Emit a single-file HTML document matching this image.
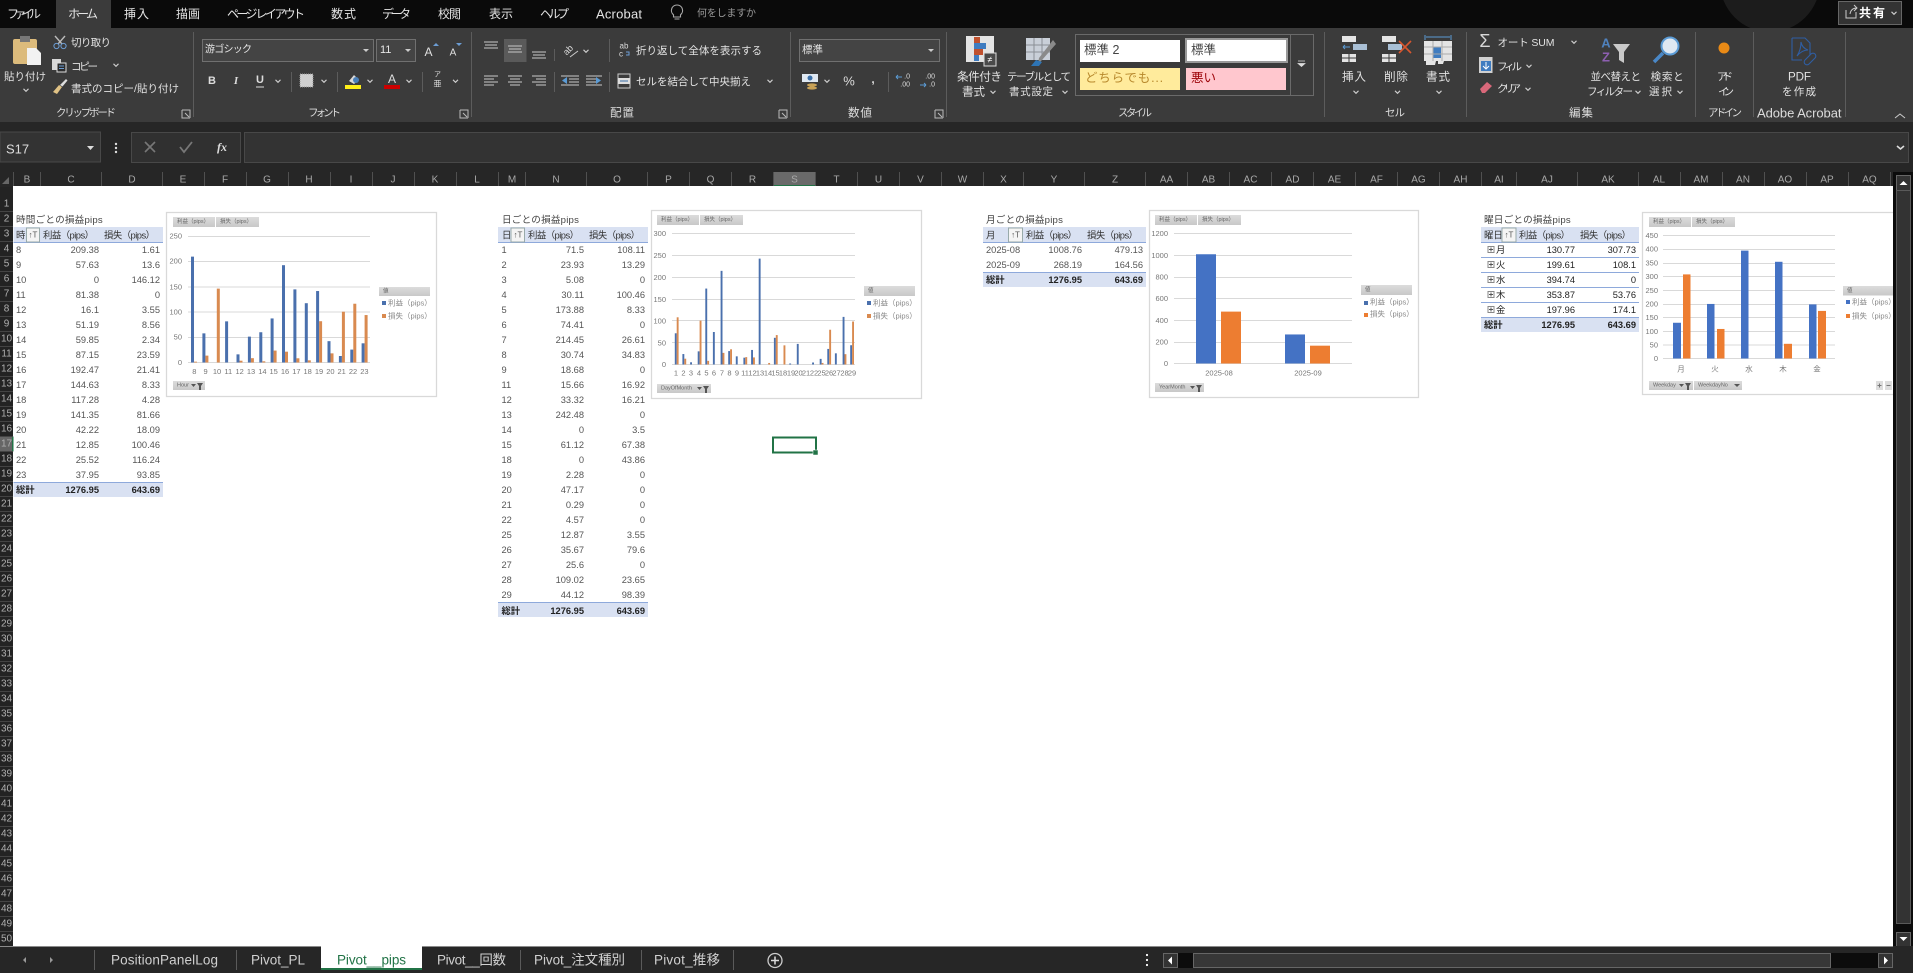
<!DOCTYPE html>
<html lang="ja"><head><meta charset="utf-8"><title>Excel</title>
<style>
html,body{margin:0;padding:0;background:#262626;width:1913px;height:973px;overflow:hidden}
svg{display:block;position:absolute;left:0;top:0;font-family:"Liberation Sans","Noto Sans CJK JP",sans-serif;filter:blur(.3px)}
text{dominant-baseline:central;white-space:pre}
.tab{font-size:12px;fill:#e4e4e4}
.r{font-size:10.5px;fill:#e2e2e2}
.r2{font-size:11.6px;fill:#e2e2e2}
.gl{font-size:10.5px;fill:#dcdcdc}
.gl2{font-size:11.6px;fill:#dcdcdc}
.m{text-anchor:middle}
.e{text-anchor:end}
.ch{font-size:10px;fill:#a8a8a8;text-anchor:middle}
.rh{font-size:10px;fill:#b0b0b0;text-anchor:middle}
.d{font-size:9.3px;fill:#555}
.b{font-size:9.3px;fill:#222;font-weight:bold}
.h{font-size:9.4px;fill:#333}
.ti{font-size:9.6px;fill:#444;letter-spacing:.2px}
.d text,text.d,.b text,text.b,text.h{transform:translateY(1px)}
text.ti{transform:translateY(1.5px)}
.ax{font-size:7.5px;fill:#777}
.fb{font-size:5.5px;fill:#666}
.lg{font-size:7.5px;fill:#888}
.tb{font-size:13.5px;fill:#d0d0d0}
.cv{fill:none;stroke:#d0d0d0;stroke-width:1.1}
.g{stroke:#d9d9d9;stroke-width:1}
.i{stroke:#c8c8c8;stroke-width:1;fill:none}
</style></head><body>
<svg width="1913" height="973" viewBox="0 0 1913 973" xmlns="http://www.w3.org/2000/svg">
<defs><path id="c" class="cv" d="M-2.5 -1.2L0 1.3L2.5 -1.2"/><path id="la" fill="none" stroke="#bbb" stroke-width="1" d="M0 0H8V8M0 0V8H8M3 3L7 7"/><linearGradient id="gb" x1="0" x2="0" y1="0" y2="1"><stop offset="0" stop-color="#dcdcdc"/><stop offset="1" stop-color="#c8c8c8"/></linearGradient></defs>

<!-- title bar -->
<rect width="1913" height="28" fill="#0a0a0a"/>
<circle cx="1770" cy="-18" r="50" fill="#1c1c1c"/><circle cx="1680" cy="-30" r="30" fill="#161616"/>
<rect x="56" width="55" height="28" fill="#3b3b3b"/>
<g class="tab">
<text x="7" y="14" textLength="34">ファイル</text><text x="68" y="14" textLength="30">ホーム</text><text x="124" y="14" textLength="25">挿入</text><text x="176" y="14" textLength="24">描画</text><text x="227" y="14" textLength="78">ページ レイアウト</text><text x="331" y="14" textLength="25">数式</text><text x="382" y="14" textLength="29">データ</text><text x="438" y="14" textLength="23">校閲</text><text x="489" y="14" textLength="24">表示</text><text x="540" y="14" textLength="29">ヘルプ</text><text x="596" y="14" font-size="13" textLength="46">Acrobat</text>
</g>
<path d="M677 5a5.5 5.5 0 0 0-3.5 9.8V17h7v-2.2A5.5 5.5 0 0 0 677 5zM674.5 19h5" fill="none" stroke="#aaa" stroke-width="1.1"/>
<text x="697" y="14" font-size="10" fill="#9a9a9a" textLength="59">何をしますか</text>
<rect x="1838.5" y="1.5" width="63" height="23" fill="#333" stroke="#666"/>
<path d="M1846 10v8h10v-6M1850 14q1-6 7-6M1854 5l3 3-3 3" fill="none" stroke="#ccc"/>
<text x="1859" y="13" font-size="12" font-weight="bold" fill="#fff" textLength="26">共有</text>
<use href="#c" x="1894" y="13"/>

<!-- ribbon -->
<rect y="28" width="1913" height="94" fill="#3b3b3b"/>
<rect y="122" width="1913" height="65" fill="#262626"/>
<path d="M193.5 32V117M471.5 32V117M790.5 32V117M946.5 32V117M1324.5 32V117M1466.5 32V117M1695.5 32V117M1753.5 32V117M1845.5 32V117" stroke="#5c5c5c"/>
<!-- clipboard -->
<rect x="13" y="39" width="24" height="25" rx="2" fill="#dcbb7c"/><rect x="20" y="36" width="10" height="6" fill="#777"/><path d="M27 48h9l5 5v12H27z" fill="#f2f2f2"/>
<text class="r" x="4" y="77" textLength="42">貼り付け</text><use href="#c" x="26" y="90"/>
<path d="M55 36l7 8M65 36l-7 8" stroke="#bbb" stroke-width="1.4"/><circle cx="56.5" cy="46" r="2.6" fill="none" stroke="#6c9dd4"/><circle cx="63.5" cy="46" r="2.6" fill="none" stroke="#6c9dd4"/>
<text class="r" x="71" y="43" textLength="40">切り取り</text>
<rect x="52" y="59" width="9" height="11" fill="#d8d8d8"/><rect x="57" y="63" width="9" height="9" fill="#2d2d2d" stroke="#ddd"/><path d="M59 66h5M59 68.5h5" stroke="#6c9dd4"/>
<text class="r" x="71" y="67" textLength="27">コピー</text><use href="#c" x="116" y="65"/>
<path d="M53 92l6-7 3 2-5 7z" fill="#e0c285"/><path d="M60 85l6-6 1.5 1.5-5 6z" fill="#ddd"/>
<text class="r" x="71" y="89" textLength="108">書式のコピー/貼り付け</text>
<text class="gl" x="56" y="113" textLength="60">クリップボード</text><use href="#la" x="182" y="110"/>
<!-- font -->
<rect x="202.5" y="39.5" width="171" height="22" fill="#444" stroke="#707070"/>
<text x="205" y="50" font-size="10" fill="#e6e6e6" textLength="47">游ゴシック</text><path d="M363 49h6l-3 3z" fill="#ccc"/>
<rect x="376.5" y="39.5" width="39" height="22" fill="#444" stroke="#707070"/>
<text x="380" y="50" font-size="11" fill="#e6e6e6">11</text><path d="M405 49h6l-3 3z" fill="#ccc"/>
<text x="428.5" y="52" font-size="12" fill="#e0e0e0" class="m">A</text><path d="M433 46l3-3 3 3z" fill="#6c9dd4"/>
<text x="453" y="53" font-size="10" fill="#e0e0e0" class="m">A</text><path d="M456 43h6l-3 3z" fill="#6c9dd4"/>
<text x="212" y="81" font-size="11" font-weight="bold" fill="#ddd" class="m">B</text>
<text x="236" y="81" font-size="11" font-style="italic" font-weight="bold" font-family="Liberation Serif" fill="#ddd" class="m">I</text>
<text x="260" y="80" font-size="11" font-weight="bold" fill="#ddd" class="m">U</text><path d="M256 87h8" stroke="#ddd"/><use href="#c" x="278" y="81"/>
<path d="M291.5 72V92M337.5 72V92M422.5 72V92" stroke="#5c5c5c"/>
<rect x="300" y="74" width="13" height="13" fill="#cfcfcf" stroke="#999" stroke-dasharray="1 1"/><use href="#c" x="324" y="81"/>
<path d="M349 81l5-6 5 5-5 4z" fill="#d8d8d8"/><circle cx="356" cy="80" r="3" fill="#4a7fb8"/><rect x="345" y="85" width="16" height="4" fill="#ffef19"/><use href="#c" x="370" y="81"/>
<text x="392" y="79" font-size="12" fill="#ddd" class="m">A</text><rect x="384" y="85" width="16" height="4" fill="#c00"/><use href="#c" x="409" y="81"/>
<text x="437.5" y="75" font-size="7" fill="#ddd" class="m">ア</text><text x="437.5" y="84" font-size="8" fill="#ddd" class="m">亜</text><use href="#c" x="455.5" y="81"/>
<text class="gl" x="308" y="113" textLength="33">フォント</text><use href="#la" x="460" y="110"/>
<!-- alignment -->
<rect x="504" y="39" width="22.5" height="23" fill="#5a5a5a"/>
<path class="i" d="M484 42h14M485 45h12M484 48h14M508 46h14M509 49h12M508 52h14M532 52h14M533 55h12M532 58h14M484 76h14M484 79h10M484 82h14M484 85h10M508 76h14M510 79h10M508 82h14M510 85h10M532 76h14M536 79h10M532 82h14M536 85h10"/>
<path d="M554.5 49V61M554.5 72V92M609.5 39V62M609.5 72V92" stroke="#5c5c5c"/>
<text x="568" y="50" font-size="9" fill="#ddd" class="m" transform="rotate(-45 568 50)">ab</text><path d="M570 57l8-6" stroke="#ccc"/><use href="#c" x="586" y="51"/>
<path d="M561 76h18M569 79h10M569 82h10M561 85h18" stroke="#c8c8c8"/><path d="M567 77v7l-5-3.5z" fill="#5b9bd5"/>
<path d="M586 76h16M586 79h10M586 82h10M586 85h16" stroke="#c8c8c8"/><path d="M596 77v7l5-3.5z" fill="#5b9bd5"/>
<text x="624" y="46" font-size="8" fill="#ddd" class="m">ab</text><text x="621" y="54" font-size="8" fill="#ddd" class="m">c</text><path d="M626 52h3v3h-3" stroke="#6c9dd4" fill="none"/>
<text class="r" x="636" y="51" textLength="126">折り返して全体を表示する</text>
<rect x="618" y="74" width="12" height="14" fill="none" stroke="#ccc"/><rect x="618" y="78" width="12" height="6" fill="#ddd"/><path d="M620 81h8" stroke="#3a6fa8"/>
<text class="r" x="636" y="82" textLength="115">セルを結合して中央揃え</text><use href="#c" x="770" y="81"/>
<text class="gl2" x="610" y="113" textLength="24">配置</text><use href="#la" x="779" y="110"/>
<!-- number -->
<rect x="799.5" y="39.5" width="140" height="22" fill="#444" stroke="#707070"/>
<text x="802" y="50" font-size="10.5" fill="#e6e6e6">標準</text><path d="M928 49h6l-3 3z" fill="#ccc"/>
<rect x="802" y="74" width="16" height="8" fill="#dfe8f2"/><circle cx="810" cy="78" r="2.5" fill="#3a6fa8"/><ellipse cx="812" cy="85" rx="5" ry="1.6" fill="#c9a257"/><ellipse cx="812" cy="88" rx="5" ry="1.6" fill="#c9a257"/>
<use href="#c" x="827" y="81"/><text x="849" y="81" font-size="13" fill="#ddd" class="m">%</text><text x="873" y="79" font-size="12" font-weight="bold" fill="#ddd" class="m">,</text>
<path d="M888.5 72V92" stroke="#5c5c5c"/>
<text x="910" y="77" font-size="7" fill="#ddd" class="e">.0</text><text x="910" y="85" font-size="7" fill="#ddd" class="e">.00</text><path d="M896 77h6M896 77l2-2M896 77l2 2" stroke="#5b9bd5"/>
<text x="935" y="77" font-size="7" fill="#ddd" class="e">.00</text><text x="935" y="85" font-size="7" fill="#ddd" class="e">.0</text><path d="M920 85h6M926 85l-2-2M926 85l-2 2" stroke="#5b9bd5"/>
<text class="gl2" x="848" y="113" textLength="24">数値</text><use href="#la" x="935" y="110"/>
<!-- conditional / table -->
<rect x="966" y="36" width="28" height="26" fill="#e4e4e4"/><rect x="974" y="37" width="6" height="6" fill="#c0512e"/><rect x="974" y="43" width="12" height="6" fill="#3f7cc0"/><rect x="974" y="49" width="9" height="6" fill="#c0512e"/><rect x="974" y="55" width="5" height="6" fill="#3f7cc0"/><rect x="984" y="53" width="12" height="13" fill="#4a4a4a" stroke="#ddd"/><text x="990" y="59.5" font-size="9" fill="#fff" class="m">≠</text>
<text class="r2" x="957" y="77" textLength="45">条件付き</text><text class="r2" x="962" y="92" textLength="23">書式</text><use href="#c" x="993" y="92"/>
<rect x="1026" y="38" width="24" height="22" fill="#c9cfd8"/><path d="M1026 45h24M1026 52h24M1034 38v22M1042 38v22" stroke="#8a8f96"/><path d="M1056 44l-14 16-4 4 1-6 14-18z" fill="#8a8a8a"/><path d="M1036 60l6 2-3 4h-8z" fill="#2e75b6"/>
<text class="r" x="1007" y="77" textLength="64">テーブルとして</text><text class="r" x="1009" y="92" textLength="44">書式設定</text><use href="#c" x="1065" y="92"/>
<!-- styles -->
<rect x="1075.5" y="34.5" width="238" height="61" fill="none" stroke="#6a6a6a"/><path d="M1290.5 34V96" stroke="#6a6a6a"/>
<rect x="1080" y="40" width="100" height="22" fill="#fff"/><text x="1084" y="50" font-size="12.5" fill="#444">標準 2</text>
<rect x="1186" y="39" width="101" height="23" fill="#fff" stroke="#999" stroke-width="2"/><text x="1191" y="50" font-size="12.5" fill="#444">標準</text>
<rect x="1080" y="68" width="100" height="22" fill="#ffeb9c"/><text x="1085" y="78" font-size="12.5" fill="#b8892d" letter-spacing=".8">どちらでも...</text>
<rect x="1186" y="68" width="100" height="22" fill="#ffc7ce"/><text x="1191" y="78" font-size="12.5" fill="#9c0006">悪い</text>
<path d="M1298 61h7M1298 63.5h7l-3.5 3z" stroke="#ddd" fill="#ddd" stroke-width=".7"/>
<text class="gl" x="1118" y="113" textLength="34">スタイル</text>
<!-- cells -->
<path d="M1342 36h14v6h-14zM1342 54h14v8h-14zM1342 43h2" fill="#e4e4e4"/><rect x="1353" y="44" width="14" height="6" fill="#a9bfd4"/><path d="M1343 47h7M1343 47l2-2M1343 47l2 2" stroke="#5b9bd5"/><path d="M1349 54v8M1342 58h14" stroke="#3b3b3b"/>
<text class="r2" x="1342" y="77" textLength="24">挿入</text><use href="#c" x="1356" y="92"/>
<path d="M1382 36h14v6h-14zM1382 54h14v8h-14z" fill="#e4e4e4"/><rect x="1388" y="44" width="14" height="6" fill="#a9bfd4"/><path d="M1399 41l12 12M1411 41l-12 12" stroke="#d9572f" stroke-width="1.6"/><path d="M1389 54v8M1382 58h14" stroke="#3b3b3b"/>
<text class="r2" x="1384" y="77" textLength="24">削除</text><use href="#c" x="1397.5" y="92"/>
<path d="M1425 35v5M1451 35v5M1426 37h24" stroke="#5b9bd5"/><rect x="1424" y="41" width="28" height="20" fill="#e4e4e4"/><rect x="1433" y="47" width="8" height="11" fill="#3f7cc0"/><path d="M1433 41v20M1442 41v20M1424 47h28M1424 54h28" stroke="#aaa"/><path d="M1426 61h10l-1 4h-9zM1438 61h6l-1 3h-5z" fill="#e4e4e4"/>
<text class="r2" x="1426" y="77" textLength="24">書式</text><use href="#c" x="1439" y="92"/>
<text class="gl" x="1385" y="113" textLength="20">セル</text>
<!-- editing -->
<text x="1485" y="41" font-size="18" fill="#d8d8d8" class="m">Σ</text><text class="r" x="1497.5" y="43" textLength="57">オート SUM</text><use href="#c" x="1574" y="42"/>
<rect x="1479" y="57" width="13.5" height="16" fill="#d0d0d0"/><rect x="1481" y="61" width="10" height="10" fill="#3f7cc0"/><path d="M1486 62v7M1483 66l3 3 3-3" stroke="#fff" fill="none"/>
<text class="r" x="1497" y="67" textLength="25">フィル</text><use href="#c" x="1529" y="66"/>
<path d="M1480 89l7-7 5 4-7 7h-3z" fill="#d9687a"/><text class="r" x="1497" y="89" textLength="24">クリア</text><use href="#c" x="1528" y="89"/>
<text x="1606" y="43" font-size="13" fill="#4f81bd" font-weight="bold" class="m">A</text><text x="1606" y="57" font-size="13" fill="#8d5fb0" font-weight="bold" class="m">Z</text><path d="M1613 44h17l-6 8v11l-5-3v-8z" fill="#c9c9c9"/>
<text class="r" x="1590.5" y="77" textLength="50.5">並べ替えと</text><text class="r" x="1587" y="92" textLength="46">フィルター</text><use href="#c" x="1638" y="92"/>
<circle cx="1670" cy="46" r="8.5" fill="#dfe8f2" stroke="#5b9bd5" stroke-width="2"/><path d="M1663 53l-9 9" stroke="#4a88c7" stroke-width="3.5"/>
<text class="r" x="1650.6" y="77" textLength="33">検索と</text><text class="r" x="1649" y="92" textLength="23">選択</text><use href="#c" x="1680" y="92"/>
<text class="gl2" x="1569" y="113" textLength="24">編集</text>
<circle cx="1724" cy="48" r="5.5" fill="#e98a16"/><text class="r" x="1717" y="77" textLength="16">アド</text><text class="r" x="1718" y="92" textLength="16">イン</text>
<text class="gl" x="1708" y="113" textLength="34">アドイン</text>
<path d="M1792 38h13l5 5v12M1792 38v22h10M1797 56q4-6 4-14q1 6 7 8q-6 0-11 6M1805 60l6-6a2.5 2.5 0 0 1 4 4l-6 6a2.5 2.5 0 0 1-4-4" fill="none" stroke="#2f5ea3" stroke-width="1.1"/>
<text class="r2" x="1788" y="77" textLength="23">PDF</text><text class="r" x="1782" y="92" textLength="34">を作成</text>
<text class="gl2" style="font-size:13px" x="1757" y="113" textLength="84.5">Adobe Acrobat</text>
<path d="M1895 118l5-4 5 4" fill="none" stroke="#ccc"/>

<!-- formula bar -->
<rect x="0" y="132" width="100.5" height="30" fill="#333" stroke="#484848"/>
<text x="6" y="149" font-size="13" fill="#ddd">S17</text><path d="M87 146h7l-3.5 4z" fill="#ddd"/>
<circle cx="116" cy="144" r="1.2" fill="#ddd"/><circle cx="116" cy="148" r="1.2" fill="#ddd"/><circle cx="116" cy="152" r="1.2" fill="#ddd"/>
<rect x="131.5" y="132.5" width="109" height="30" fill="#303030" stroke="#484848"/>
<path d="M145 142l10 10M155 142l-10 10" stroke="#777" stroke-width="1.6"/><path d="M180 147l4 5 8-10" fill="none" stroke="#777" stroke-width="1.8"/>
<text x="222" y="147" font-family="Liberation Serif" font-style="italic" font-weight="bold" font-size="12" fill="#ddd" class="m">fx</text>
<rect x="244.5" y="132.5" width="1664" height="30" fill="#333" stroke="#484848"/>
<path d="M1897 146l3.5 3 3.5-3" fill="none" stroke="#ddd" stroke-width="1.6"/>

<!-- column headers -->
<path d="M9 184V177L2 184z" fill="#666"/>
<rect x="773.5" y="172" width="42" height="14" fill="#6a6a6a"/><rect x="773.5" y="185" width="42" height="2" fill="#217346"/>
<path stroke="#505050" d="M13.5 172V186M40.5 172V186M101.5 172V186M162.5 172V186M204.5 172V186M246.5 172V186M288.5 172V186M330.5 172V186M372.5 172V186M414.5 172V186M456.5 172V186M498.5 172V186M525.5 172V186M586.5 172V186M647.5 172V186M689.5 172V186M731.5 172V186M773.5 172V186M815.5 172V186M857.5 172V186M899.5 172V186M941.5 172V186M983.5 172V186M1023.5 172V186M1084.5 172V186M1145.5 172V186M1187.5 172V186M1229.5 172V186M1271.5 172V186M1313.5 172V186M1355.5 172V186M1397.5 172V186M1439.5 172V186M1481.5 172V186M1516.5 172V186M1577.5 172V186M1638.5 172V186M1680.5 172V186M1722.5 172V186M1764.5 172V186M1806.5 172V186M1848.5 172V186M1890.5 172V186"/>
<g class="ch"><text x="27" y="180">B</text><text x="71" y="180">C</text><text x="132" y="180">D</text><text x="183" y="180">E</text><text x="225" y="180">F</text><text x="267" y="180">G</text><text x="309" y="180">H</text><text x="351" y="180">I</text><text x="393" y="180">J</text><text x="435" y="180">K</text><text x="477" y="180">L</text><text x="512" y="180">M</text><text x="556" y="180">N</text><text x="617" y="180">O</text><text x="668.5" y="180">P</text><text x="710.5" y="180">Q</text><text x="752.5" y="180">R</text><text x="794.5" y="180">S</text><text x="836.5" y="180">T</text><text x="878.5" y="180">U</text><text x="920.5" y="180">V</text><text x="962.5" y="180">W</text><text x="1003.5" y="180">X</text><text x="1054" y="180">Y</text><text x="1115" y="180">Z</text><text x="1166.5" y="180">AA</text><text x="1208.5" y="180">AB</text><text x="1250.5" y="180">AC</text><text x="1292.5" y="180">AD</text><text x="1334.5" y="180">AE</text><text x="1376.5" y="180">AF</text><text x="1418.5" y="180">AG</text><text x="1460.5" y="180">AH</text><text x="1499" y="180">AI</text><text x="1547" y="180">AJ</text><text x="1608" y="180">AK</text><text x="1659" y="180">AL</text><text x="1701" y="180">AM</text><text x="1743" y="180">AN</text><text x="1785" y="180">AO</text><text x="1827" y="180">AP</text><text x="1869.5" y="180">AQ</text></g>

<!-- sheet -->
<rect x="13" y="186" width="1880" height="760" fill="#fff"/>
<rect x="0" y="187" width="13" height="759" fill="#232323"/>
<rect x="0" y="436.5" width="13" height="15" fill="#666"/><rect x="12" y="436.5" width="1.5" height="15" fill="#217346"/>
<line x1="6.5" x2="6.5" y1="211" y2="946" stroke="#444" stroke-width="13" stroke-dasharray="1 14"/>
<g class="rh" transform="translate(6.5,0)"><text y="204">1</text><text y="219">2</text><text y="234">3</text><text y="249">4</text><text y="264">5</text><text y="279">6</text><text y="294">7</text><text y="309">8</text><text y="324">9</text><text y="339">10</text><text y="354">11</text><text y="369">12</text><text y="384">13</text><text y="399">14</text><text y="414">15</text><text y="429">16</text><text y="444">17</text><text y="459">18</text><text y="474">19</text><text y="489">20</text><text y="504">21</text><text y="519">22</text><text y="534">23</text><text y="549">24</text><text y="564">25</text><text y="579">26</text><text y="594">27</text><text y="609">28</text><text y="624">29</text><text y="639">30</text><text y="654">31</text><text y="669">32</text><text y="684">33</text><text y="699">34</text><text y="714">35</text><text y="729">36</text><text y="744">37</text><text y="759">38</text><text y="774">39</text><text y="789">40</text><text y="804">41</text><text y="819">42</text><text y="834">43</text><text y="849">44</text><text y="864">45</text><text y="879">46</text><text y="894">47</text><text y="909">48</text><text y="924">49</text><text y="939">50</text></g>

<!-- table 1 -->
<rect x="13.5" y="227" width="149.5" height="15" fill="#d9e1f2"/><path d="M13.5 242.5H163" stroke="#8ea9db"/>
<rect x="13.5" y="482" width="149.5" height="15" fill="#d9e1f2"/><path d="M13.5 482.5H163" stroke="#8ea9db"/>
<text class="ti" x="16" y="219">時間ごとの損益pips</text>
<text class="h" x="16" y="234">時</text><rect x="26.5" y="228" width="13" height="14" fill="#f4f4f4" stroke="#9aa"/><text x="33" y="235" font-size="8" fill="#555" class="m">↑T</text>
<text class="h" x="43" y="234" textLength="51">利益（pips）</text><text class="h" x="104" y="234" textLength="51">損失（pips）</text>
<g class="d" transform="translate(16,0)"><text y="249">8</text><text y="264">9</text><text y="279">10</text><text y="294">11</text><text y="309">12</text><text y="324">13</text><text y="339">14</text><text y="354">15</text><text y="369">16</text><text y="384">17</text><text y="399">18</text><text y="414">19</text><text y="429">20</text><text y="444">21</text><text y="459">22</text><text y="474">23</text></g>
<g class="d e" transform="translate(99,0)"><text y="249">209.38</text><text y="264">57.63</text><text y="279">0</text><text y="294">81.38</text><text y="309">16.1</text><text y="324">51.19</text><text y="339">59.85</text><text y="354">87.15</text><text y="369">192.47</text><text y="384">144.63</text><text y="399">117.28</text><text y="414">141.35</text><text y="429">42.22</text><text y="444">12.85</text><text y="459">25.52</text><text y="474">37.95</text></g>
<g class="d e" transform="translate(160,0)"><text y="249">1.61</text><text y="264">13.6</text><text y="279">146.12</text><text y="294">0</text><text y="309">3.55</text><text y="324">8.56</text><text y="339">2.34</text><text y="354">23.59</text><text y="369">21.41</text><text y="384">8.33</text><text y="399">4.28</text><text y="414">81.66</text><text y="429">18.09</text><text y="444">100.46</text><text y="459">116.24</text><text y="474">93.85</text></g>
<text class="b" x="16" y="489">総計</text><text class="b e" x="99" y="489">1276.95</text><text class="b e" x="160" y="489">643.69</text>

<!-- table 2 -->
<rect x="498" y="227" width="150" height="15" fill="#d9e1f2"/><path d="M498 242.5H648" stroke="#8ea9db"/>
<rect x="498" y="602" width="150" height="15" fill="#d9e1f2"/><path d="M498 602.5H648" stroke="#8ea9db"/>
<text class="ti" x="502" y="219">日ごとの損益pips</text>
<text class="h" x="502" y="234">日</text><rect x="511" y="228" width="13.5" height="14" fill="#f4f4f4" stroke="#9aa"/><text x="518" y="235" font-size="8" fill="#555" class="m">↑T</text>
<text class="h" x="528" y="234" textLength="51">利益（pips）</text><text class="h" x="589" y="234" textLength="51">損失（pips）</text>
<g class="d" transform="translate(501.5,0)"><text y="249">1</text><text y="264">2</text><text y="279">3</text><text y="294">4</text><text y="309">5</text><text y="324">6</text><text y="339">7</text><text y="354">8</text><text y="369">9</text><text y="384">11</text><text y="399">12</text><text y="414">13</text><text y="429">14</text><text y="444">15</text><text y="459">18</text><text y="474">19</text><text y="489">20</text><text y="504">21</text><text y="519">22</text><text y="534">25</text><text y="549">26</text><text y="564">27</text><text y="579">28</text><text y="594">29</text></g>
<g class="d e" transform="translate(584,0)"><text y="249">71.5</text><text y="264">23.93</text><text y="279">5.08</text><text y="294">30.11</text><text y="309">173.88</text><text y="324">74.41</text><text y="339">214.45</text><text y="354">30.74</text><text y="369">18.68</text><text y="384">15.66</text><text y="399">33.32</text><text y="414">242.48</text><text y="429">0</text><text y="444">61.12</text><text y="459">0</text><text y="474">2.28</text><text y="489">47.17</text><text y="504">0.29</text><text y="519">4.57</text><text y="534">12.87</text><text y="549">35.67</text><text y="564">25.6</text><text y="579">109.02</text><text y="594">44.12</text></g>
<g class="d e" transform="translate(645,0)"><text y="249">108.11</text><text y="264">13.29</text><text y="279">0</text><text y="294">100.46</text><text y="309">8.33</text><text y="324">0</text><text y="339">26.61</text><text y="354">34.83</text><text y="369">0</text><text y="384">16.92</text><text y="399">16.21</text><text y="414">0</text><text y="429">3.5</text><text y="444">67.38</text><text y="459">43.86</text><text y="474">0</text><text y="489">0</text><text y="504">0</text><text y="519">0</text><text y="534">3.55</text><text y="549">79.6</text><text y="564">0</text><text y="579">23.65</text><text y="594">98.39</text></g>
<text class="b" x="501.5" y="610">総計</text><text class="b e" x="584" y="610">1276.95</text><text class="b e" x="645" y="610">643.69</text>

<!-- table 3 -->
<rect x="983" y="227" width="163" height="15" fill="#d9e1f2"/><path d="M983 242.5H1146" stroke="#8ea9db"/>
<rect x="983" y="272" width="163" height="15" fill="#d9e1f2"/><path d="M983 272.5H1146" stroke="#8ea9db"/>
<text class="ti" x="986" y="219">月ごとの損益pips</text>
<text class="h" x="986" y="234">月</text><rect x="1008.5" y="228" width="14" height="14" fill="#f4f4f4" stroke="#9aa"/><text x="1015.5" y="235" font-size="8" fill="#555" class="m">↑T</text>
<text class="h" x="1026" y="234" textLength="51">利益（pips）</text><text class="h" x="1087" y="234" textLength="51">損失（pips）</text>
<text class="d" x="986" y="249">2025-08</text><text class="d" x="986" y="264">2025-09</text><text class="b" x="986" y="279">総計</text>
<g class="d e" transform="translate(1082,0)"><text y="249">1008.76</text><text y="264">268.19</text></g><text class="b e" x="1082" y="279">1276.95</text>
<g class="d e" transform="translate(1143,0)"><text y="249">479.13</text><text y="264">164.56</text></g><text class="b e" x="1143" y="279">643.69</text>

<!-- table 4 -->
<rect x="1481" y="227" width="158" height="15" fill="#d9e1f2"/>
<rect x="1481" y="317" width="158" height="15" fill="#d9e1f2"/>
<path d="M1481 242.5H1639M1481 257.5H1639M1481 272.5H1639M1481 287.5H1639M1481 302.5H1639M1481 317.5H1639" stroke="#8ea9db"/>
<text class="ti" x="1484" y="219">曜日ごとの損益pips</text>
<text class="h" x="1484" y="234">曜日</text><rect x="1502" y="228" width="14" height="14" fill="#f4f4f4" stroke="#9aa"/><text x="1509" y="235" font-size="8" fill="#555" class="m">↑T</text>
<text class="h" x="1519" y="234" textLength="51">利益（pips）</text><text class="h" x="1580" y="234" textLength="51">損失（pips）</text>
<path d="M1488 246.5h6v6h-6zM1488 261.5h6v6h-6zM1488 276.5h6v6h-6zM1488 291.5h6v6h-6zM1488 306.5h6v6h-6z" fill="none" stroke="#888"/><path d="M1489 249.5h4M1491 247.5v4M1489 264.5h4M1491 262.5v4M1489 279.5h4M1491 277.5v4M1489 294.5h4M1491 292.5v4M1489 309.5h4M1491 307.5v4" stroke="#555"/>
<g class="d" style="fill:#222" transform="translate(1496,0)"><text y="249">月</text><text y="264">火</text><text y="279">水</text><text y="294">木</text><text y="309">金</text></g>
<g class="d e" style="fill:#222" transform="translate(1575,0)"><text y="249">130.77</text><text y="264">199.61</text><text y="279">394.74</text><text y="294">353.87</text><text y="309">197.96</text></g>
<g class="d e" style="fill:#222" transform="translate(1636,0)"><text y="249">307.73</text><text y="264">108.1</text><text y="279">0</text><text y="294">53.76</text><text y="309">174.1</text></g>
<text class="b" x="1484" y="324">総計</text><text class="b e" x="1575" y="324">1276.95</text><text class="b e" x="1636" y="324">643.69</text>

<!-- chart 1 -->
<rect x="166.5" y="212.5" width="270" height="184" fill="#fff" stroke="#d9d9d9" stroke-width="1.3"/>
<rect x="173" y="217" width="42" height="10" fill="url(#gb)"/><rect x="216" y="217" width="43" height="10" fill="url(#gb)"/>
<text class="fb" x="177" y="222">利益（pips）</text><text class="fb" x="220" y="222">損失（pips）</text>
<path class="g" d="M188 236.5H370M188 261.5H370M188 287H370M188 312H370M188 337.5H370M188 362.5H370"/>
<g class="ax e" transform="translate(182,0)"><text y="236">250</text><text y="261">200</text><text y="287">150</text><text y="312">100</text><text y="337">50</text><text y="362.5">0</text></g>
<g transform="translate(188,362.5) scale(1,-0.5056)" fill="#4a70ad"><rect x="3" width="3" height="209.38"/><rect x="14.4" width="3" height="57.63"/><rect x="37.1" width="3" height="81.38"/><rect x="48.5" width="3" height="16.1"/><rect x="59.9" width="3" height="51.19"/><rect x="71.3" width="3" height="59.85"/><rect x="82.6" width="3" height="87.15"/><rect x="94" width="3" height="192.47"/><rect x="105.4" width="3" height="144.63"/><rect x="116.8" width="3" height="117.28"/><rect x="128.1" width="3" height="141.35"/><rect x="139.5" width="3" height="42.22"/><rect x="150.9" width="3" height="12.85"/><rect x="162.3" width="3" height="25.52"/><rect x="173.6" width="3" height="37.95"/></g>
<g transform="translate(188,362.5) scale(1,-0.5056)" fill="#d98a50"><rect x="6" width="3" height="1.61"/><rect x="17.4" width="3" height="13.6"/><rect x="28.8" width="3" height="146.12"/><rect x="51.5" width="3" height="3.55"/><rect x="62.9" width="3" height="8.56"/><rect x="74.3" width="3" height="2.34"/><rect x="85.6" width="3" height="23.59"/><rect x="97" width="3" height="21.41"/><rect x="108.4" width="3" height="8.33"/><rect x="119.8" width="3" height="4.28"/><rect x="131.1" width="3" height="81.66"/><rect x="142.5" width="3" height="18.09"/><rect x="153.9" width="3" height="100.46"/><rect x="165.3" width="3" height="116.24"/><rect x="176.6" width="3" height="93.85"/></g>
<g class="ax m" transform="translate(0,371.5)"><text x="194.3">8</text><text x="205.6">9</text><text x="217">10</text><text x="228.3">11</text><text x="239.7">12</text><text x="251">13</text><text x="262.4">14</text><text x="273.7">15</text><text x="285">16</text><text x="296.4">17</text><text x="307.7">18</text><text x="319">19</text><text x="330.4">20</text><text x="341.7">21</text><text x="353">22</text><text x="364.4">23</text></g>
<rect x="173" y="381" width="32" height="9" fill="url(#gb)"/><text class="fb" x="177" y="385.5">Hour</text><path d="M191 384h5l-2.5 3zM197 383h6l-2 3v4h-2v-4z" fill="#555"/>
<rect x="379" y="287" width="51" height="9" fill="url(#gb)"/><text class="fb" x="383" y="291.5">値</text>
<rect x="382" y="301" width="4" height="4" fill="#4a70ad"/><rect x="382" y="314" width="4" height="4" fill="#d98a50"/>
<text class="lg" x="388" y="303">利益（pips）</text><text class="lg" x="388" y="316">損失（pips）</text>

<!-- chart 2 -->
<rect x="651.5" y="210.5" width="270" height="188" fill="#fff" stroke="#d9d9d9" stroke-width="1.3"/>
<rect x="657" y="215" width="42" height="10" fill="url(#gb)"/><rect x="700" y="215" width="43" height="10" fill="url(#gb)"/>
<text class="fb" x="661" y="220">利益（pips）</text><text class="fb" x="704" y="220">損失（pips）</text>
<path class="g" d="M672 233.5H855M672 255.5H855M672 277.5H855M672 299.5H855M672 320.5H855M672 342.5H855M672 364.5H855"/>
<g class="ax e" transform="translate(666,0)"><text y="233.5">300</text><text y="255.5">250</text><text y="277.5">200</text><text y="299.5">150</text><text y="321">100</text><text y="343">50</text><text y="364.5">0</text></g>
<g transform="translate(672,364.5) scale(1,-0.4367)" fill="#4a70ad"><rect x="2.8" width="1.9" height="71.5"/><rect x="10.4" width="1.9" height="23.93"/><rect x="18.1" width="1.9" height="5.08"/><rect x="25.7" width="1.9" height="30.11"/><rect x="33.3" width="1.9" height="173.88"/><rect x="40.9" width="1.9" height="74.41"/><rect x="48.6" width="1.9" height="214.45"/><rect x="56.2" width="1.9" height="30.74"/><rect x="63.8" width="1.9" height="18.68"/><rect x="71.4" width="1.9" height="15.66"/><rect x="79.1" width="1.9" height="33.32"/><rect x="86.7" width="1.9" height="242.48"/><rect x="101.9" width="1.9" height="61.12"/><rect x="117.2" width="1.9" height="2.28"/><rect x="124.8" width="1.9" height="47.17"/><rect x="140.1" width="1.9" height="4.57"/><rect x="147.7" width="1.9" height="12.87"/><rect x="155.3" width="1.9" height="35.67"/><rect x="162.9" width="1.9" height="25.6"/><rect x="170.6" width="1.9" height="109.02"/><rect x="178.2" width="1.9" height="44.12"/></g>
<g transform="translate(672,364.5) scale(1,-0.4367)" fill="#d98a50"><rect x="4.7" width="1.9" height="108.11"/><rect x="12.3" width="1.9" height="13.29"/><rect x="27.6" width="1.9" height="100.46"/><rect x="35.2" width="1.9" height="8.33"/><rect x="50.5" width="1.9" height="26.61"/><rect x="58.1" width="1.9" height="34.83"/><rect x="73.3" width="1.9" height="16.92"/><rect x="81" width="1.9" height="16.21"/><rect x="96.2" width="1.9" height="3.5"/><rect x="103.8" width="1.9" height="67.38"/><rect x="111.5" width="1.9" height="43.86"/><rect x="149.6" width="1.9" height="3.55"/><rect x="157.2" width="1.9" height="79.6"/><rect x="172.5" width="1.9" height="23.65"/><rect x="180.1" width="1.9" height="98.39"/></g>
<g class="ax m" transform="translate(0,373)"><text x="676">1</text><text x="683.5">2</text><text x="691">3</text><text x="699">4</text><text x="706.5">5</text><text x="714">6</text><text x="722">7</text><text x="729.5">8</text><text x="737">9</text><text x="745">11</text><text x="752.5">12</text><text x="760">13</text><text x="768">14</text><text x="775.5">15</text><text x="783">18</text><text x="791">19</text><text x="798.5">20</text><text x="806">21</text><text x="814">22</text><text x="821.5">25</text><text x="829">26</text><text x="836.5">27</text><text x="844.5">28</text><text x="852">29</text></g>
<rect x="657" y="384" width="54" height="9" fill="url(#gb)"/><text class="fb" x="661" y="388.5">DayOfMonth</text><path d="M697 387h5l-2.5 3zM703 386h6l-2 3v4h-2v-4z" fill="#555"/>
<rect x="864" y="286" width="51" height="10" fill="url(#gb)"/><text class="fb" x="868" y="291">値</text>
<rect x="867" y="301" width="4" height="4" fill="#4a70ad"/><rect x="867" y="314" width="4" height="4" fill="#d98a50"/>
<text class="lg" x="873" y="303">利益（pips）</text><text class="lg" x="873" y="316">損失（pips）</text>

<!-- chart 3 -->
<rect x="1149.5" y="210.5" width="269" height="187" fill="#fff" stroke="#d9d9d9" stroke-width="1.3"/>
<rect x="1155" y="215" width="42" height="10" fill="url(#gb)"/><rect x="1198" y="215" width="43" height="10" fill="url(#gb)"/>
<text class="fb" x="1159" y="220">利益（pips）</text><text class="fb" x="1202" y="220">損失（pips）</text>
<path class="g" d="M1174 233.5H1352M1174 255.5H1352M1174 277.5H1352M1174 298.5H1352M1174 320.5H1352M1174 342.5H1352M1174 363.5H1352"/>
<g class="ax e" transform="translate(1168,0)"><text y="233.5">1200</text><text y="255.5">1000</text><text y="277">800</text><text y="298.5">600</text><text y="320.5">400</text><text y="342">200</text><text y="363.5">0</text></g>
<g transform="translate(0,363.5) scale(1,-0.1083)"><rect x="1196" width="20" height="1008.76" fill="#4472c4"/><rect x="1221" width="20" height="479.13" fill="#ed7d31"/><rect x="1285" width="20" height="268.19" fill="#4472c4"/><rect x="1310" width="20" height="164.56" fill="#ed7d31"/></g>
<text class="ax m" x="1219" y="373">2025-08</text><text class="ax m" x="1308" y="373">2025-09</text>
<rect x="1155" y="383" width="49" height="9" fill="url(#gb)"/><text class="fb" x="1159" y="387.5">YearMonth</text><path d="M1190 386h5l-2.5 3zM1196 385h6l-2 3v4h-2v-4z" fill="#555"/>
<rect x="1361" y="285" width="51" height="10" fill="url(#gb)"/><text class="fb" x="1365" y="290">値</text>
<rect x="1364" y="301" width="4" height="4" fill="#4a70ad"/><rect x="1364" y="313" width="4" height="4" fill="#ed7d31"/>
<text class="lg" x="1370" y="302">利益（pips）</text><text class="lg" x="1370" y="314">損失（pips）</text>

<!-- chart 4 -->
<rect x="1642.5" y="212.5" width="270" height="182" fill="#fff" stroke="#d9d9d9" stroke-width="1.3"/>
<rect x="1649" y="217" width="42" height="10" fill="url(#gb)"/><rect x="1692" y="217" width="43" height="10" fill="url(#gb)"/>
<text class="fb" x="1653" y="222">利益（pips）</text><text class="fb" x="1696" y="222">損失（pips）</text>
<path class="g" d="M1663 235.5H1835M1663 249.5H1835M1663 263.5H1835M1663 276.5H1835M1663 290.5H1835M1663 304.5H1835M1663 317.5H1835M1663 331.5H1835M1663 345H1835M1663 358.5H1835"/>
<g class="ax e" transform="translate(1658,0)"><text y="235.5">450</text><text y="249">400</text><text y="263">350</text><text y="276.5">300</text><text y="290.5">250</text><text y="304">200</text><text y="317.5">150</text><text y="331.5">100</text><text y="345">50</text><text y="358.5">0</text></g>
<g transform="translate(0,358.5) scale(1,-0.2733)"><g fill="#4472c4"><rect x="1673" width="8" height="130.77"/><rect x="1707" width="7.5" height="199.61"/><rect x="1741" width="7.5" height="394.74"/><rect x="1775" width="7.5" height="353.87"/><rect x="1809" width="7.5" height="197.96"/></g><g fill="#ed7d31"><rect x="1683" width="7.5" height="307.73"/><rect x="1717" width="7.5" height="108.1"/><rect x="1784" width="8" height="53.76"/><rect x="1818" width="8" height="174.1"/></g></g>
<g class="ax m" font-size="8" transform="translate(0,369)"><text x="1681">月</text><text x="1715">火</text><text x="1749">水</text><text x="1783">木</text><text x="1817">金</text></g>
<rect x="1649" y="381" width="44" height="9" fill="url(#gb)"/><text class="fb" x="1653" y="385.5">Weekday</text><path d="M1679 384h5l-2.5 3zM1685 383h6l-2 3v4h-2v-4z" fill="#555"/>
<rect x="1694" y="381" width="48" height="9" fill="url(#gb)"/><text class="fb" x="1698" y="385.5">WeekdayNo</text><path d="M1734 384h6l-3 3z" fill="#555"/>
<rect x="1876" y="381" width="7" height="9" fill="#ddd"/><rect x="1885" y="381" width="7" height="9" fill="#ddd"/><path d="M1877.5 385.5h4M1879.5 383.5v4M1886.5 385.5h4" stroke="#777"/>
<rect x="1843" y="286" width="50" height="9.5" fill="url(#gb)"/><text class="fb" x="1847" y="291">値</text>
<rect x="1846" y="300" width="4" height="4" fill="#4472c4"/><rect x="1846" y="314" width="4" height="4" fill="#ed7d31"/>
<text class="lg" x="1852" y="302">利益（pips）</text><text class="lg" x="1852" y="316">損失（pips）</text>

<!-- selection -->
<rect x="773" y="437.5" width="43" height="15" fill="none" stroke="#217346" stroke-width="2"/><rect x="813" y="450" width="5" height="5" fill="#217346" stroke="#fff" stroke-width=".5"/>

<!-- vertical scrollbar -->
<rect x="1893" y="172" width="20" height="774" fill="#0c0c0c"/>
<rect x="1896.5" y="175.5" width="14" height="15" fill="#333" stroke="#666"/><path d="M1899.5 185l4-4 4 4z" fill="#fff"/>
<rect x="1896.5" y="190.5" width="14" height="733" fill="#333" stroke="#5a5a5a"/>
<rect x="1896.5" y="932.5" width="14" height="14" fill="#333" stroke="#666"/><path d="M1899.5 937l4 4 4-4z" fill="#fff"/>

<!-- sheet tabs -->
<rect y="946" width="1913" height="27" fill="#262626"/><rect y="946" width="1893" height="1" fill="#8a8a8a"/>
<path d="M26 957v6l-3-3zM50 957v6l3-3z" fill="#999"/>
<path d="M94.5 950V970M236.5 950V970M520.5 950V970M641.5 950V970M733.5 950V970" stroke="#5a5a5a"/>
<rect x="321" y="946" width="101" height="24" fill="#fff"/><rect x="321" y="968" width="101" height="2" fill="#217346"/>
<text class="tb" x="111" y="960" textLength="107">PositionPanelLog</text><text class="tb" x="251" y="960" textLength="54">Pivot_PL</text>
<text class="tb" style="fill:#217346" x="337" y="960" textLength="69">Pivot__pips</text>
<text class="tb" x="437" y="960" textLength="69">Pivot__回数</text><text class="tb" x="534" y="960" textLength="91">Pivot_注文種別</text><text class="tb" x="654" y="960" textLength="66">Pivot_推移</text>
<circle cx="775" cy="960.5" r="7" fill="none" stroke="#ccc" stroke-width="1.3"/><path d="M771 960.5h8M775 956.5v8" stroke="#ddd" stroke-width="1.5"/>
<circle cx="1147" cy="955" r="1.1" fill="#fff"/><circle cx="1147" cy="960" r="1.1" fill="#fff"/><circle cx="1147" cy="965" r="1.1" fill="#fff"/>
<rect x="1163" y="953" width="729" height="15" fill="#0c0c0c"/>
<rect x="1163.5" y="953.5" width="14" height="14" fill="#333" stroke="#666"/><path d="M1172 956.5v8l-4-4z" fill="#fff"/>
<rect x="1193.5" y="953.5" width="637" height="14" fill="#373737" stroke="#666"/>
<rect x="1878.5" y="953.5" width="14" height="14" fill="#333" stroke="#666"/><path d="M1884 956.5v8l4-4z" fill="#fff"/>
</svg>
</body></html>
